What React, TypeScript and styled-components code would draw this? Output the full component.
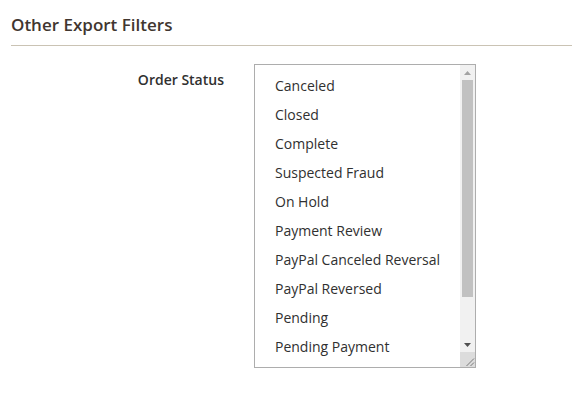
import React from 'react';
import styled, { createGlobalStyle } from 'styled-components';

const GlobalStyle = createGlobalStyle`
    html, body {
        margin: 0;
        padding: 0;
        background: #ffffff;
    }
    body {
        font-family: "Open Sans", "Liberation Sans", sans-serif;
        color: #303030;
    }
`;

const Page = styled.div`
    padding-left: 11px;
`;

const SectionTitle = styled.h2`
    margin: 0;
    padding: 13px 0 9px;
    font-size: 17px;
    line-height: 23px;
    font-weight: 600;
    color: #41362f;
    border-bottom: 1px solid #cac3b4;
`;

const Field = styled.div`
    display: grid;
    grid-template-columns: 243px 222px;
    margin-top: 18px;
`;

const Label = styled.label`
    padding-right: 30px;
    padding-top: 6px;
    text-align: right;
    font-size: 14px;
    line-height: 19px;
    font-weight: 600;
    color: #303030;
`;

const MultiSelect = styled.div`
    box-sizing: border-box;
    width: 222px;
    height: 304px;
    border: 1px solid #adadad;
    background: #ffffff;
    display: flex;
`;

const OptionList = styled.div`
    flex: 1;
    overflow: hidden;
    padding-top: 6px;
`;

const Option = styled.div<{ $selected?: boolean }>`
    height: 29px;
    line-height: 29px;
    padding-left: 20px;
    font-size: 14px;
    white-space: nowrap;
    color: #303030;
    background: ${p => (p.$selected ? '#cecece' : 'transparent')};
`;

const ScrollBar = styled.div`
    width: 15px;
    display: flex;
    flex-direction: column;
    background: #f1f1f1;
`;

const ScrollButton = styled.div`
    height: 15px;
    display: flex;
    align-items: center;
    justify-content: center;
`;

const Track = styled.div`
    flex: 1;
    display: flex;
    flex-direction: column;
`;

const Thumb = styled.div<{ $size: number }>`
    height: ${p => p.$size}px;
    margin: 0 2px;
    background: #c1c1c1;
`;

const Corner = styled.div`
    height: 15px;
    background: #dcdcdc;
    display: flex;
    align-items: flex-end;
    justify-content: flex-end;
`;

const Arrow = ({ up, color }: { up?: boolean; color: string }) => (
    <svg width="7" height="4" viewBox="0 0 7 4">
        <polygon points={up ? '0,4 3.5,0 7,4' : '0,0 7,0 3.5,4'} fill={color} />
    </svg>
);

const statuses = [
    'Canceled',
    'Closed',
    'Complete',
    'Suspected Fraud',
    'On Hold',
    'Payment Review',
    'PayPal Canceled Reversal',
    'PayPal Reversed',
    'Pending',
    'Pending Payment',
];

const App = () => {
    return (
        <Page>
            <GlobalStyle />
            <SectionTitle>Other Export Filters</SectionTitle>
            <Field>
                <Label>Order Status</Label>
                <MultiSelect>
                    <OptionList>
                        {statuses.map((s, i) => (
                            <Option key={i}>{s}</Option>
                        ))}
                    </OptionList>
                    <ScrollBar>
                        <ScrollButton>
                            <Arrow up color="#a3a3a3" />
                        </ScrollButton>
                        <Track>
                            <Thumb $size={217} />
                        </Track>
                        <ScrollButton>
                            <Arrow color="#505050" />
                        </ScrollButton>
                        <Corner>
                            <svg width="15" height="15" viewBox="0 0 15 15">
                                <path d="M14 6.5 L6.5 14 M14 10.5 L10.5 14" stroke="#7a7a7a" strokeWidth="1" />
                            </svg>
                        </Corner>
                    </ScrollBar>
                </MultiSelect>
            </Field>
        </Page>
    );
};

export default App;
